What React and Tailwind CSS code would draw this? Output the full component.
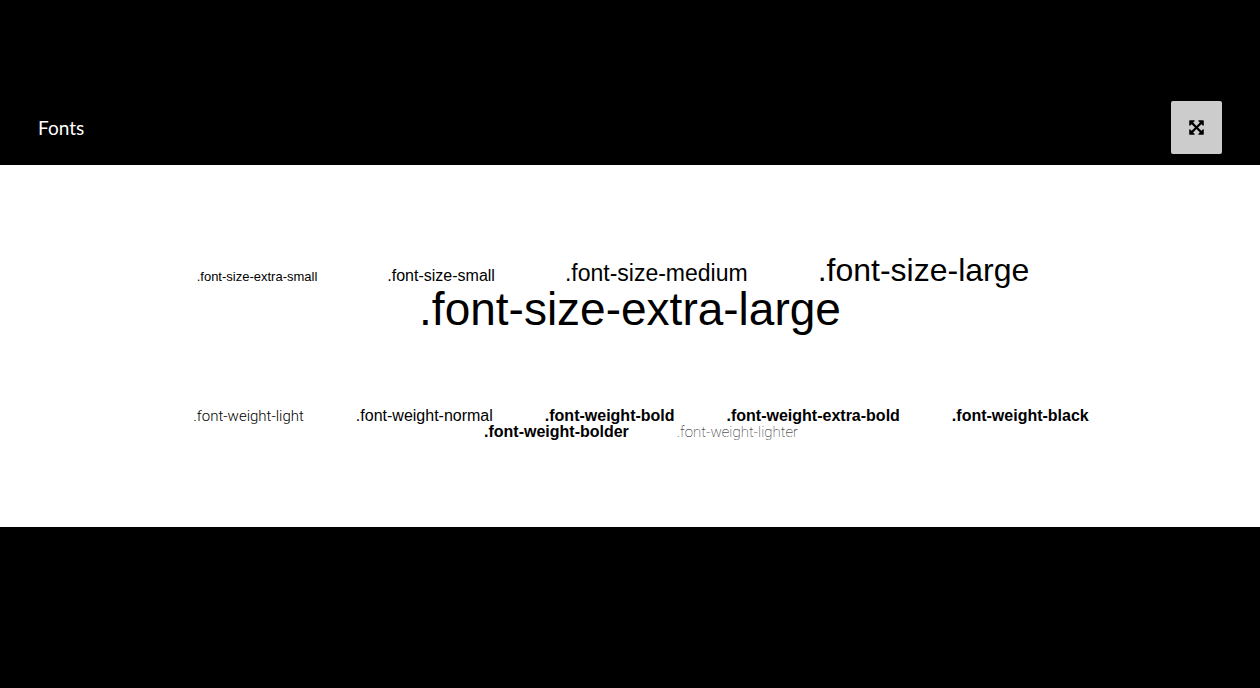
const sizes = [
  { name: '.font-size-extra-small', style: 'text-[13px]' },
  { name: '.font-size-small', style: 'text-[16px]' },
  { name: '.font-size-medium', style: 'text-[23px]' },
  { name: '.font-size-large', style: 'text-[32px]' },
];

const weights = [
  { name: '.font-weight-light', style: "font-['Roboto'] text-[15px] font-light" },
  { name: '.font-weight-normal', style: 'font-normal' },
  { name: '.font-weight-bold', style: 'font-bold' },
  { name: '.font-weight-extra-bold', style: 'font-extrabold' },
  { name: '.font-weight-black', style: 'font-black' },
];

const relativeWeights = [
  { name: '.font-weight-bolder', style: 'font-bold' },
  { name: '.font-weight-lighter', style: "font-['Roboto'] text-[15px] font-thin" },
];

function Row({ items, className }) {
  return (
    <div className={`flex flex-wrap items-baseline justify-center leading-none ${className}`}>
      {items.map((item) => (
        <span key={item.name} className={`${item.style} leading-none`}>
          {item.name}
        </span>
      ))}
    </div>
  );
}

function ExpandIcon() {
  return (
    <svg viewBox="0 0 1792 1792" className="size-[17px] fill-current" aria-hidden="true">
      <path d="M1411 541l-355 355 355 355 144-144q29-31 70-14 39 17 39 59v448q0 26-19 45t-45 19h-448q-42 0-59-40-17-39 14-69l144-144-355-355-355 355 144 144q31 30 14 69-17 40-59 40h-448q-26 0-45-19t-19-45v-448q0-42 40-59 39-17 69 14l144 144 355-355-355-355-144 144q-19 19-45 19-12 0-24-5-40-17-40-59v-448q0-26 19-45t45-19h448q42 0 59 40 17 39-14 69l-144 144 355 355 355-355-144-144q-31-30-14-69 17-40 59-40h448q26 0 45 19t19 45v448q0 42-39 59-13 5-25 5-26 0-45-19z" />
    </svg>
  );
}

export default function App() {
  return (
    <div className="min-h-screen bg-black pt-[101px] font-['Liberation_Sans',sans-serif]">
      <header className="flex items-center justify-between px-[38px] pb-[11px]">
        <h1 className="font-['Lato',sans-serif] text-[19px] leading-6 text-white">Fonts</h1>
        <button
          type="button"
          aria-label="Expand"
          className="flex h-[53px] w-[51px] items-center justify-center rounded-xs bg-[#ccc] text-black"
        >
          <ExpandIcon />
        </button>
      </header>
      <main className="bg-white pt-[89px] pb-[87px] text-black">
        <section className="text-center">
          <Row items={sizes} className="gap-x-[70px] pr-[34px]" />
          <p className="text-[46px] leading-[46px]">.font-size-extra-large</p>
        </section>
        <section className="pt-[76px] text-[16px]">
          <Row items={weights} className="gap-x-[52px] pl-[22px]" />
          <Row items={relativeWeights} className="gap-x-12 pl-[22px]" />
        </section>
      </main>
    </div>
  );
}
